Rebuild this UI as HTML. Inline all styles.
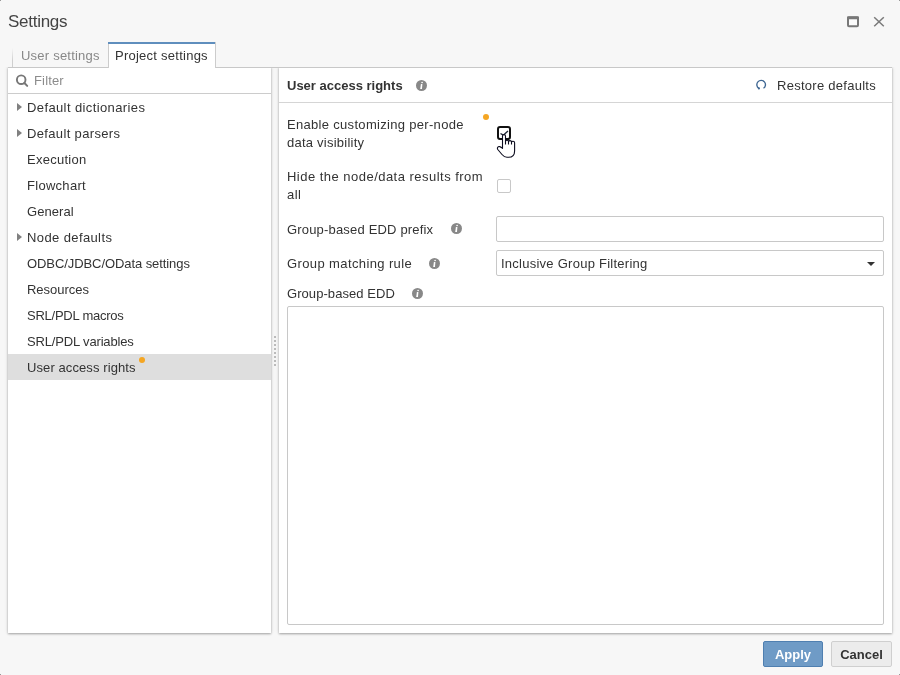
<!DOCTYPE html>
<html><head><meta charset="utf-8">
<style>
*{box-sizing:border-box;margin:0;padding:0}
html,body{width:900px;height:675px;overflow:hidden;background:#f7f7f7;font-family:"Liberation Sans",sans-serif;color:#333}
body{position:relative}
.a{position:absolute;white-space:nowrap}
.t{font-size:13px;letter-spacing:0.25px;line-height:16px;will-change:transform}
.title{will-change:transform;left:8px;top:12px;font-size:17px;line-height:20px;color:#444;letter-spacing:-0.27px}
.tab1{left:12px;top:48px;width:1px;height:19px;background:linear-gradient(to bottom,rgba(200,200,200,0),#cfcfcf 65%)}
.tab2{left:108px;top:42px;width:108px;height:26px;background:#fff;border-left:1px solid #ccc;border-right:1px solid #ccc}
.tab2b{left:108px;top:42px;width:107px;height:2px;background:#5f8ebd}
.panel{background:#fff;box-shadow:0 1px 2px rgba(0,0,0,0.3),0 0 4px rgba(0,0,0,0.12);border-top:1px solid #ccc}
.line{height:1px;background:#ccc}
.sel{background:#dedede}
.tri{width:0;height:0;border-left:5px solid #808080;border-top:4px solid transparent;border-bottom:4px solid transparent}
.info{width:11px;height:11px;border-radius:50%;background:#888}
.info:after{content:"";position:absolute;left:4.7px;top:4.5px;width:1.7px;height:4.5px;background:#fff}
.info:before{content:"";position:absolute;left:4.7px;top:2px;width:1.7px;height:1.7px;background:#fff}
.inp{background:#fff;border:1px solid #c8c8c8;border-radius:2px}
.cb{width:14px;height:14px;border:1px solid #c8c8c8;border-radius:2px;background:#fff}
.btn{will-change:transform;height:26px;border-radius:2px;font-weight:bold;font-size:13px;line-height:24px;text-align:center}
.dot{width:6px;height:6px;border-radius:50%;background:#f5a623}
</style></head><body>
<div class="a title">Settings</div>
<svg class="a" style="left:847px;top:16px" width="12" height="12" viewBox="0 0 12 12"><rect x="1" y="1.5" width="10" height="8.7" fill="#fbfbfb" stroke="#787878" stroke-width="2" rx="1"/><rect x="0" y="0.3" width="12" height="3" fill="#787878" rx="1"/></svg>
<svg class="a" style="left:873px;top:16px" width="12" height="12" viewBox="0 0 12 12"><path d="M1.2 1.2L10.8 10.3M10.8 1.2L1.2 10.3" stroke="#7a7a7a" stroke-width="1.5"/></svg>


<!-- left panel -->
<div class="a panel" style="left:8px;top:67px;width:263px;height:566px"></div>
<div class="a line" style="left:8px;top:93px;width:263px"></div>

<svg class="a" style="left:15px;top:74px" width="14" height="14" viewBox="0 0 14 14"><circle cx="6.2" cy="5.7" r="4.3" fill="none" stroke="#777" stroke-width="1.9"/><path d="M9.4 9L12.2 11.9" stroke="#777" stroke-width="2" stroke-linecap="round"/></svg>
<div class="a t" style="left:34px;top:73px;color:#8c8c8c;letter-spacing:0.15px">Filter</div>

<div class="a sel" style="left:8px;top:354px;width:263px;height:26px"></div>
<div class="a tri" style="left:17px;top:103px"></div>
<div class="a tri" style="left:17px;top:129px"></div>
<div class="a tri" style="left:17px;top:233px"></div>
<div class="a t" style="left:27px;top:100px;letter-spacing:0.386px">Default dictionaries</div>
<div class="a t" style="left:27px;top:126px;letter-spacing:0.346px">Default parsers</div>
<div class="a t" style="left:27px;top:152px;letter-spacing:0.267px">Execution</div>
<div class="a t" style="left:27px;top:178px;letter-spacing:0.283px">Flowchart</div>
<div class="a t" style="left:27px;top:204px;letter-spacing:0.073px">General</div>
<div class="a t" style="left:27px;top:230px;letter-spacing:0.39px">Node defaults</div>
<div class="a t" style="left:27px;top:256px;letter-spacing:-0.079px">ODBC/JDBC/OData settings</div>
<div class="a t" style="left:27px;top:282px;letter-spacing:-0.03px">Resources</div>
<div class="a t" style="left:27px;top:308px;letter-spacing:-0.24px">SRL/PDL macros</div>
<div class="a t" style="left:27px;top:334px;letter-spacing:-0.158px">SRL/PDL variables</div>
<div class="a t" style="left:27px;top:360px;letter-spacing:0.093px">User access rights</div>
<div class="a dot" style="left:139px;top:357px"></div>

<!-- splitter -->
<svg class="a" style="left:274px;top:336px" width="3" height="31"><g fill="#bbb"><rect x="0" y="0" width="2" height="2"/><rect x="0" y="4" width="2" height="2"/><rect x="0" y="8" width="2" height="2"/><rect x="0" y="12" width="2" height="2"/><rect x="0" y="16" width="2" height="2"/><rect x="0" y="20" width="2" height="2"/><rect x="0" y="24" width="2" height="2"/><rect x="0" y="28" width="2" height="2"/></g></svg>

<!-- right panel -->
<div class="a panel" style="left:279px;top:67px;width:613px;height:566px"></div>
<div class="a" style="left:0;top:60px;width:900px;height:7px;background:#f7f7f7"></div>
<div class="a line" style="left:8px;top:67px;width:884px;background:#c8c8c8"></div>
<div class="a tab1"></div>
<div class="a t" style="left:20.5px;top:48px;color:#888;letter-spacing:0.22px">User settings</div>
<div class="a tab2"></div><div class="a tab2b"></div>
<div class="a t" style="left:115px;top:48px;color:#333;letter-spacing:0.25px">Project settings</div>
<div class="a line" style="left:279px;top:102px;width:613px;background:#d5d5d5"></div>
<div class="a t" style="left:287px;top:78px;font-weight:bold;letter-spacing:0">User access rights</div>
<svg class="a" style="left:416px;top:80px" width="11" height="11" viewBox="0 0 11 11"><circle cx="5.5" cy="5.5" r="5.5" fill="#888"/><path d="M4.9 4.1H6.4L6 8.9H4.2Z" fill="#fff"/><ellipse cx="6.1" cy="2.5" rx="0.85" ry="0.72" fill="#fff"/></svg>
<svg class="a" style="left:755px;top:79px" width="12" height="12" viewBox="0 0 12 12"><path d="M3.8 9.3A4.3 4.3 0 1 1 8.5 9.3" fill="none" stroke="#3f6793" stroke-width="1.35"/><circle cx="3.9" cy="9.4" r="1.1" fill="#3f6793"/></svg>
<div class="a t" style="left:777px;top:78px;letter-spacing:0.269px">Restore defaults</div>

<div class="a t" style="left:287px;top:116px;line-height:18px;letter-spacing:0.31px">Enable customizing per-node</div>
<div class="a t" style="left:287px;top:134px;line-height:18px;letter-spacing:0.236px">data visibility</div>
<div class="a dot" style="left:483px;top:114px"></div>
<div class="a cb" style="left:497px;top:126px;border:2px solid #111;border-radius:3px"></div>
<svg class="a" style="left:499px;top:128px" width="11" height="10" viewBox="0 0 11 10"><path d="M1.5 5.5L4.3 7.2L9 3" fill="none" stroke="#202838" stroke-width="1.4"/></svg>

<div class="a t" style="left:287px;top:168px;line-height:18px;letter-spacing:0.475px">Hide the node/data results from</div>
<div class="a t" style="left:287px;top:186px;line-height:18px;letter-spacing:0.5px">all</div>
<div class="a cb" style="left:497px;top:179px"></div>

<div class="a t" style="left:287px;top:222px;letter-spacing:0.179px">Group-based EDD prefix</div>
<svg class="a" style="left:451px;top:223px" width="11" height="11" viewBox="0 0 11 11"><circle cx="5.5" cy="5.5" r="5.5" fill="#888"/><path d="M4.9 4.1H6.4L6 8.9H4.2Z" fill="#fff"/><ellipse cx="6.1" cy="2.5" rx="0.85" ry="0.72" fill="#fff"/></svg>
<div class="a inp" style="left:496px;top:216px;width:388px;height:26px"></div>

<div class="a t" style="left:287px;top:256px;letter-spacing:0.386px">Group matching rule</div>
<svg class="a" style="left:429px;top:258px" width="11" height="11" viewBox="0 0 11 11"><circle cx="5.5" cy="5.5" r="5.5" fill="#888"/><path d="M4.9 4.1H6.4L6 8.9H4.2Z" fill="#fff"/><ellipse cx="6.1" cy="2.5" rx="0.85" ry="0.72" fill="#fff"/></svg>
<div class="a inp" style="left:496px;top:250px;width:388px;height:26px"></div>
<div class="a t" style="left:501px;top:256px;letter-spacing:0.253px">Inclusive Group Filtering</div>
<div class="a" style="left:867px;top:262px;width:0;height:0;border-top:4px solid #333;border-left:4px solid transparent;border-right:4px solid transparent"></div>

<div class="a t" style="left:287px;top:286px;letter-spacing:0.068px">Group-based EDD</div>
<svg class="a" style="left:412px;top:288px" width="11" height="11" viewBox="0 0 11 11"><circle cx="5.5" cy="5.5" r="5.5" fill="#888"/><path d="M4.9 4.1H6.4L6 8.9H4.2Z" fill="#fff"/><ellipse cx="6.1" cy="2.5" rx="0.85" ry="0.72" fill="#fff"/></svg>
<div class="a inp" style="left:287px;top:306px;width:597px;height:319px"></div>

<!-- cursor -->
<svg class="a" style="left:495px;top:131px" width="22" height="28" viewBox="0 0 22 28"><path d="M7.5 17.4V5C7.5 3.2 10.5 3.2 10.5 5V10.5C10.5 8.6 13.5 8.6 13.5 10.5V11C13.5 9.1 16.5 9.1 16.5 11V11.5C16.5 9.7 19.6 9.7 19.6 11.8V20C19.6 24 17 26.3 13.5 26.3H12C9.8 26.3 8.5 25.3 7 23.5L2.8 18.5C2 17.5 2.6 15.3 4.6 15.6C5.8 15.8 6.6 16.6 7.5 17.4Z" fill="#fff" stroke="#0c0c1e" stroke-width="1.1" stroke-linejoin="round"/><path d="M10.5 10.5V13.6M13.5 11V13.6M16.5 11.5V13.6" stroke="#0c0c1e" stroke-width="1.1"/></svg>

<!-- buttons -->
<div class="a btn" style="left:763px;top:641px;width:60px;background:#6f9bc6;border:1px solid #4f7fb0;color:#fff;padding-top:1px">Apply</div>
<div class="a btn" style="left:831px;top:641px;width:61px;background:#ececec;border:1px solid #cfcfcf;color:#333;padding-top:1px">Cancel</div>
<div class="a" style="left:0;top:0;width:1px;height:1px;background:#999"></div><div class="a" style="left:899px;top:0;width:1px;height:1px;background:#999"></div><div class="a" style="left:0;top:674px;width:1px;height:1px;background:#999"></div><div class="a" style="left:899px;top:674px;width:1px;height:1px;background:#999"></div>
</body></html>
